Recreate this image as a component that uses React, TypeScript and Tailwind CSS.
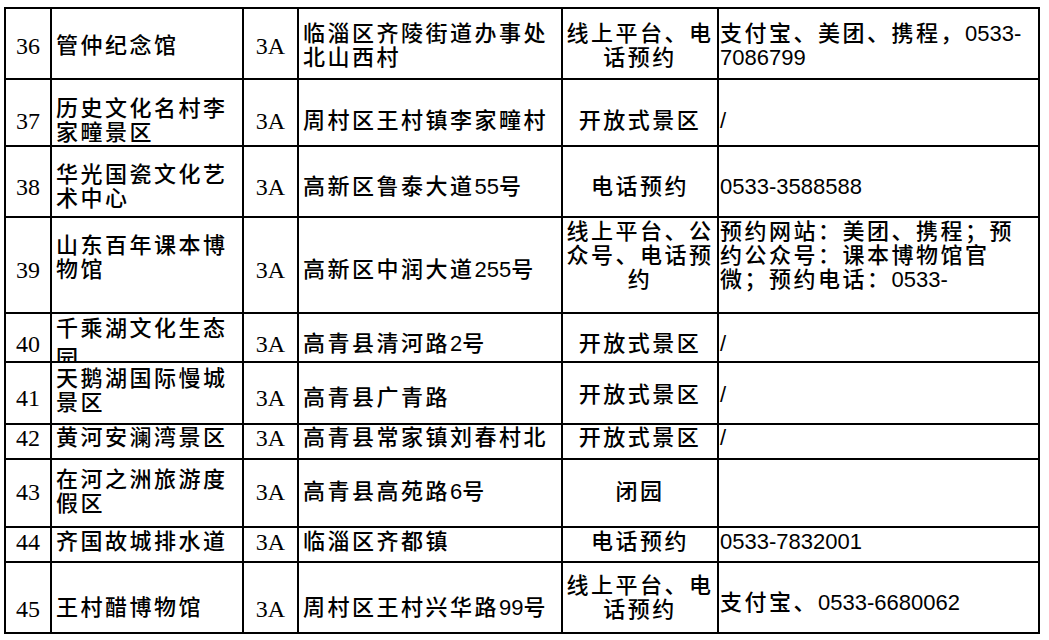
import React from "react"

// 2px black grid lines, Word-table look
const COLS = "grid-cols-[46px_192px_55px_264px_156px_321px]"
const ROW_H = "grid-rows-[71px_67px_71px_96px_49px_62px_35px_68px_35px_71px]"

const same = (c: string) => [c, c, c, c, c, c]

type Row = {
  no: string
  name: string
  addr: string
  way: string
  note: string
  pad: string[]
  nameInner?: string
}

const ROWS: Row[] = [
  { no: "36", name: "管仲纪念馆", addr: "临淄区齐陵街道办事处北山西村", way: "线上平台、电话预约", note: "支付宝、美团、携程，0533-\u200b7086799", pad: same("pt-[4px]") },
  { no: "37", name: "历史文化名村李家疃景区", addr: "周村区王村镇李家疃村", way: "开放式景区", note: "/", pad: same("pt-[16px]") },
  { no: "38", name: "华光国瓷文化艺术中心", addr: "高新区鲁泰大道55号", way: "电话预约", note: "0533-3588588", pad: same("pt-[10px]") },
  {
    no: "39", name: "山东百年课本博物馆", addr: "高新区中润大道255号", way: "线上平台、公众号、电话预约",
    note: "预约网站：美团、携程；预约公众号：课本博物馆官微；预约电话：0533-",
    pad: ["pt-[9px]", "pb-[14px]", "pt-[9px]", "pt-[9px]", "pb-[18px]", "pb-[18px]"],
  },
  {
    no: "40", name: "千乘湖文化生态园", addr: "高青县清河路2号", way: "开放式景区", note: "/",
    pad: ["pt-[12px]", "items-start", "pt-[12px]", "pt-[12px]", "pt-[12px]", "pt-[12px]"],
    nameInner: "leading-[30px]",
  },
  { no: "41", name: "天鹅湖国际慢城景区", addr: "高青县广青路", way: "开放式景区", note: "/", pad: ["pt-[10px]", "pb-[5px]", "pt-[10px]", "pt-[10px]", "pt-[4px]", "pt-[4px]"] },
  { no: "42", name: "黄河安澜湾景区", addr: "高青县常家镇刘春村北", way: "开放式景区", note: "/", pad: same("pb-[8px]") },
  { no: "43", name: "在河之洲旅游度假区", addr: "高青县高苑路6号", way: "闭园", note: "", pad: same("pb-[2px]") },
  { no: "44", name: "齐国故城排水道", addr: "临淄区齐都镇", way: "电话预约", note: "0533-7832001", pad: same("pb-[6px]") },
  {
    no: "45", name: "王村醋博物馆", addr: "周村区王村兴华路99号", way: "线上平台、电话预约", note: "支付宝、0533-6680062",
    pad: ["pt-[22px]", "pt-[20px]", "pt-[22px]", "pt-[20px]", "pt-0", "pt-[10px]"],
  },
]

// letter-spacing only on the Chinese runs; digits stay tight
function Txt({ s }: { s: string }) {
  const parts = s.split(/([\x00-\x7f]+)/)
  return (
    <>
      {parts.map((p, i) =>
        /^[\x00-\x7f]+$/.test(p) ? (
          <span key={i} className="tracking-normal">{p}</span>
        ) : (
          p
        )
      )}
    </>
  )
}

const cell = "flex items-center border-r-2 border-b-2 border-black overflow-hidden"
const sans = "font-['Liberation_Sans','Noto_Sans_CJK_SC',sans-serif] tracking-[2.5px]"
const serif = "font-['Liberation_Serif','Noto_Sans_CJK_SC',serif] text-[24px]"

export default function App() {
  return (
    <div className="min-h-screen w-full bg-white text-black text-[22px] leading-[24px] font-medium">
      <div className={`ml-[4px] mt-[7px] grid w-fit ${COLS} ${ROW_H} border-l-2 border-t-2 border-black`}>
        {ROWS.map((r) => (
          <React.Fragment key={r.no}>
            <div className={`${cell} justify-center ${serif} ${r.pad[0]}`}>{r.no}</div>
            <div className={`${cell} pl-[4px] pr-[2px] ${sans} ${r.pad[1]}`}>
              <div className={`w-full ${r.nameInner ?? ""}`}>
                <Txt s={r.name} />
              </div>
            </div>
            <div className={`${cell} justify-center ${serif} ${r.pad[2]}`}>3A</div>
            <div className={`${cell} pl-[4px] pr-[2px] ${sans} ${r.pad[3]}`}>
              <div className="w-full">
                <Txt s={r.addr} />
              </div>
            </div>
            <div className={`${cell} px-[2px] ${sans} ${r.pad[4]}`}>
              <div className="w-full text-center">
                <Txt s={r.way} />
              </div>
            </div>
            <div className={`${cell} pl-[1px] pr-[2px] ${sans} ${r.pad[5]}`}>
              {r.note && (
                <div className="w-full">
                  <Txt s={r.note} />
                </div>
              )}
            </div>
          </React.Fragment>
        ))}
      </div>
    </div>
  )
}
